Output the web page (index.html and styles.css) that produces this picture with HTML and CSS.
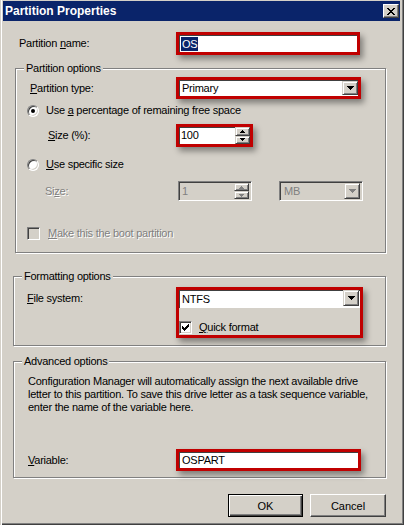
FILE: index.html
```html
<!DOCTYPE html>
<html lang="en">
<head>
    <meta charset="UTF-8">
    <title>Partition Properties</title>
    <link rel="stylesheet" href="styles.css">
</head>
<body>
<div class="window">
    <div class="titlebar">
        <span class="title">Partition Properties</span>
        <span class="close">
            <svg width="8" height="7" viewBox="0 0 8 7"><path d="M0 0h2v1H0zM6 0h2v1H6zM1 1h2v1H1zM5 1h2v1H5zM2 2h4v1H2zM3 3h2v1H3zM2 4h4v1H2zM1 5h2v1H1zM5 5h2v1H5zM0 6h2v1H0zM6 6h2v1H6z"/></svg>
        </span>
    </div>
    <div class="content">
        <div class="row row-name">
            <span class="lbl w-name">Partition <u>n</u>ame:</span>
            <div class="hl hl-name">
                <div class="field"><span class="sel">OS</span></div>
            </div>
        </div>

        <fieldset class="group group-part">
            <legend>Partition options</legend>
            <div class="row row-type">
                <span class="lbl w-type"><u>P</u>artition type:</span>
                <div class="hl hl-type">
                    <div class="field combo">
                        <span class="val">Primary</span>
                        <span class="drop"><svg width="7" height="4" viewBox="0 0 7 4"><path d="M0 0h7v1H0zM1 1h5v1H1zM2 2h3v1H2zM3 3h1v1H3z"/></svg></span>
                    </div>
                </div>
            </div>
            <div class="opt opt-pct">
                <span class="radio on"></span>
                <span>Use <u>a</u> percentage of remaining free space</span>
            </div>
            <div class="row row-size">
                <span class="lbl w-size"><u>S</u>ize (%):</span>
                <div class="hl hl-spin">
                    <div class="field spin">
                        <span class="val">100</span>
                        <span class="spin-btns">
                            <span><svg width="5" height="3" viewBox="0 0 5 3"><path d="M2 0h1v1H2zM1 1h3v1H1zM0 2h5v1H0z"/></svg></span>
                            <span><svg width="5" height="3" viewBox="0 0 5 3"><path d="M0 0h5v1H0zM1 1h3v1H1zM2 2h1v1H2z"/></svg></span>
                        </span>
                    </div>
                </div>
            </div>
            <div class="opt opt-spec">
                <span class="radio"></span>
                <span><u>U</u>se specific size</span>
            </div>
            <div class="row row-fixed">
                <span class="lbl w-fixed off">Si<u>z</u>e:</span>
                <div class="box spin off-field">
                    <span class="val">1</span>
                    <span class="spin-btns dim">
                        <span><svg width="5" height="3" viewBox="0 0 5 3"><path d="M2 0h1v1H2zM1 1h3v1H1zM0 2h5v1H0z"/></svg></span>
                        <span><svg width="5" height="3" viewBox="0 0 5 3"><path d="M0 0h5v1H0zM1 1h3v1H1zM2 2h1v1H2z"/></svg></span>
                    </span>
                </div>
                <div class="box combo unit off-field">
                    <span class="val">MB</span>
                    <span class="drop dim"><svg width="7" height="4" viewBox="0 0 7 4"><path d="M0 0h7v1H0zM1 1h5v1H1zM2 2h3v1H2zM3 3h1v1H3z"/></svg></span>
                </div>
            </div>
            <div class="opt opt-boot">
                <span class="check off-field"></span>
                <span class="off"><u>M</u>ake this the boot partition</span>
            </div>
        </fieldset>

        <fieldset class="group group-fmt">
            <legend>Formatting options</legend>
            <div class="row row-fs">
                <span class="lbl w-fs"><u>F</u>ile system:</span>
                <div class="hl hl-fs">
                    <div class="field combo">
                        <span class="val">NTFS</span>
                        <span class="drop"><svg width="7" height="4" viewBox="0 0 7 4"><path d="M0 0h7v1H0zM1 1h5v1H1zM2 2h3v1H2zM3 3h1v1H3z"/></svg></span>
                    </div>
                    <div class="opt opt-quick">
                        <span class="check">
                            <svg width="7" height="7" viewBox="0 0 7 7"><path d="M6 0h1v3H6zM5 1h1v3H5zM4 2h1v3H4zM3 3h1v3H3zM2 4h1v3H2zM1 3h1v3H1zM0 2h1v3H0z"/></svg>
                        </span>
                        <span><u>Q</u>uick format</span>
                    </div>
                </div>
            </div>
        </fieldset>

        <fieldset class="group group-adv">
            <legend>Advanced options</legend>
            <p class="note">Configuration Manager will automatically assign the next available drive letter to this partition. To save this drive letter as a task sequence variable, enter the name of the variable here.</p>
            <div class="row row-var">
                <span class="lbl w-var"><u>V</u>ariable:</span>
                <div class="hl hl-var">
                    <div class="field"><span class="val">OSPART</span></div>
                </div>
            </div>
        </fieldset>

        <div class="buttons">
            <button class="btn btn-default">OK</button>
            <button class="btn">Cancel</button>
        </div>
    </div>
</div>
</body>
</html>
```

FILE: styles.css
```css
*{margin: 0;padding: 0;box-sizing: border-box;}
body {
    background: #fff;
    font: 11px "Liberation Sans", Arial, sans-serif;
    letter-spacing: -0.25px;
    color: #000;
    overflow: hidden;
}
u { text-decoration: underline; text-underline-offset: 1px; }

/*========window chrome========*/
.window {
    width: 404px;
    height: 525px;
    padding: 1px 4px 4px 3px;
    background: #d4d0c8;
    box-shadow: inset 1px 0 #d4d0c8, inset 2px 0 #fff, inset -1px -1px #404040, inset -2px -2px #808080;
    display: flex;
    flex-direction: column;
}
.titlebar {
    height: 20px;
    background: #0a246a;
    display: flex;
    align-items: center;
    justify-content: space-between;
    padding: 0 1px 0 2px;
}
.title {
    color: #fff;
    font-weight: bold;
    font-size: 12px;
    letter-spacing: 0;
}
.close {
    width: 16px;
    height: 14px;
    background: #d4d0c8;
    border: 1px solid;
    border-color: #fff #404040 #404040 #fff;
    box-shadow: inset -1px -1px #808080;
    display: flex;
    align-items: center;
    justify-content: center;
}
.close svg { display: block; }

.content {
    flex: 1;
    display: flex;
    flex-direction: column;
}

/*========rows========*/
.row {
    display: flex;
    align-items: center;
}
.lbl { flex: none; line-height: 13px; }
.off { color: #808080; text-shadow: 1px 1px 0 #fff; }

.row-name { margin-top: 11px; padding-left: 16px; }
.w-name { width: 157px; }

/*========red highlight boxes========*/
.hl {
    border: 3px solid #c00000;
    box-shadow: 3px 4px 6px rgba(0,0,0,.4);
    background: #fff;
}
.hl-name { width: 184px; height: 23px; }
.hl-type { width: 185px; height: 22px; }
.hl-spin { width: 77px; height: 23px; }
.hl-var { width: 185px; height: 22px; }
.hl-fs {
    width: 187px;
    height: 51px;
    background: #d4d0c8;
}

.field {
    height: 100%;
    background: #fff;
    box-shadow: inset 1px 1px #404040;
    display: flex;
    align-items: center;
    padding-left: 2px;
}
.sel {
    background: #0a246a;
    color: #fff;
    line-height: 14px;
    padding: 0 1px;
}
.val { line-height: 13px; }

/* sunken 2px field for plain controls */
.box {
    height: 20px;
    border: 1px solid;
    border-color: #808080 #fff #fff #808080;
    box-shadow: inset 1px 1px #404040, inset -1px -1px #d4d0c8;
    display: flex;
    align-items: center;
    padding: 2px 2px 2px 3px;
}
.off-field { background: #d4d0c8; color: #808080; }

.combo .val { flex: 1; padding-left: 1px; }
.drop {
    width: 16px;
    height: 14px;
    flex: none;
    background: #d4d0c8;
    border: 1px solid;
    border-color: #d4d0c8 #404040 #404040 #d4d0c8;
    box-shadow: inset 1px 1px #fff, inset -1px -1px #808080;
    display: flex;
    align-items: center;
    justify-content: center;
}
.drop svg, .spin-btns svg { display: block; }
.dim svg { fill: #808080; }

.spin .val { flex: 1; }
.spin-btns {
    width: 15px;
    height: 100%;
    flex: none;
    display: flex;
    flex-direction: column;
}
.spin-btns span {
    flex: 1;
    background: #d4d0c8;
    border: 1px solid;
    border-color: #d4d0c8 #404040 #404040 #d4d0c8;
    box-shadow: inset 1px 1px #fff, inset -1px -1px #808080;
    display: flex;
    align-items: center;
    justify-content: center;
}
.hl-spin .spin { padding-right: 0; }

/*========group boxes========*/
.group {
    border: 1px solid #808080;
    box-shadow: 1px 1px 0 #fff, inset 1px 1px 0 #fff;
    min-width: 0;
}
.group legend {
    margin-left: 8px;
    padding: 0 2px;
    line-height: 13px;
    background: #d4d0c8;
}
.group-part {
    margin: 7px 0 0 12px;
    width: 371px;
    padding: 0 0 12px 0;
}
.group-fmt {
    margin: 17px 0 0 10px;
    width: 373px;
    padding: 0 0 7px 0;
}
.group-adv {
    margin: 9px 0 0 10px;
    width: 373px;
    padding: 0 0 6px 0;
}

.row-type { margin-top: 2px; padding-left: 14px; }
.w-type { width: 146px; }

.opt {
    display: flex;
    align-items: center;
    line-height: 13px;
}
.opt-pct, .opt-spec { padding-left: 11px; gap: 7px; height: 13px; }
.opt-pct { margin-top: 5px; }
.opt-spec { margin-top: 11px; }

.radio {
    width: 12px;
    height: 12px;
    flex: none;
    border-radius: 50%;
    background: #fff;
    border: 1px solid;
    border-color: #808080 #fff #fff #808080;
    box-shadow: inset 1px 1px #404040, inset -1px -1px #d4d0c8;
    display: flex;
    align-items: center;
    justify-content: center;
}
.radio.on::after {
    content: "";
    width: 4px;
    height: 4px;
    border-radius: 50%;
    background: #000;
}

.row-size { margin-top: 7px; padding-left: 32px; }
.w-size { width: 128px; }

.row-fixed { margin-top: 10px; padding-left: 29px; }
.w-fixed { width: 133px; }
.row-fixed .spin { width: 74px; padding-right: 2px; }
.row-fixed .spin .spin-btns { height: 16px; }
.unit { width: 84px; margin-left: 27px; }
.unit .drop { height: 16px; }

.check {
    width: 13px;
    height: 13px;
    flex: none;
    background: #fff;
    border: 1px solid;
    border-color: #808080 #fff #fff #808080;
    box-shadow: inset 1px 1px #404040, inset -1px -1px #d4d0c8;
    display: flex;
    align-items: center;
    justify-content: center;
}
.check svg { display: block; }
.opt-boot { margin-top: 26px; padding-left: 11px; gap: 8px; }
.opt-boot .check { background: #d4d0c8; }

/*========formatting========*/
.row-fs { margin-top: 4px; padding-left: 13px; align-items: flex-start; }
.w-fs { width: 149px; line-height: 22px; }
.hl-fs .combo { height: 18px; padding-right: 1px; }
.hl-fs .drop { height: 16px; align-self: flex-start; }
.opt-quick { margin-top: 13px; gap: 7px; }

/*========advanced========*/
.note {
    margin-top: 7px;
    padding: 0 8px 0 14px;
    line-height: 13px;
}
.row-var { margin-top: 35px; padding-left: 14px; }
.w-var { width: 148px; }
.hl-var .field { padding-left: 3px; }

/*========buttons========*/
.buttons {
    margin-top: 16px;
    padding-right: 14px;
    display: flex;
    justify-content: flex-end;
    gap: 7px;
}
.btn {
    width: 76px;
    height: 23px;
    font: inherit;
    letter-spacing: 0;
    background: #d4d0c8;
    border: 1px solid;
    border-color: #fff #404040 #404040 #fff;
    box-shadow: inset -1px -1px #808080;
}
.btn-default {
    width: 75px;
    border: 1px solid #000;
    box-shadow: inset 1px 1px #fff, inset -1px -1px #404040, inset -2px -2px #808080;
}
```
